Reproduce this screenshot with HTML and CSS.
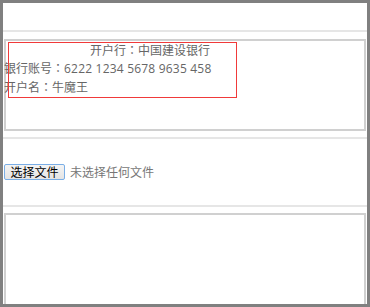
FILE: index.html
```html
<!DOCTYPE html>
<html lang="zh-CN">
<head>
<meta charset="utf-8">
<title>开户信息</title>
<link rel="stylesheet" href="styles.css">
</head>
<body>
<div class="frame">
  <div class="section header"></div>
  <div class="section info">
    <div class="box box-info">
      <div class="info-text">
        <p class="line line-first">开户行<span class="colon" lang="zh-TW">：</span>中国建设银行</p>
        <p class="line">银行账号<span class="colon" lang="zh-TW">：</span><span class="num">6222 1234 5678 9635 458</span></p>
        <p class="line">开户名<span class="colon" lang="zh-TW">：</span>牛魔王</p>
      </div>
      <div class="mark"></div>
    </div>
  </div>
  <div class="section upload">
    <button class="file-btn" type="button">选择文件</button>
    <span class="file-state">未选择任何文件</span>
  </div>
  <div class="section last">
    <div class="box box-empty"></div>
  </div>
</div>
</body>
</html>
```
FILE: styles.css
```css
html, body {
  margin: 0;
  padding: 0;
  background: #808080;
}
.frame {
  width: 370px;
  height: 307px;
  box-sizing: border-box;
  border: 3px solid #808080;
  background: #fff;
  overflow: hidden;
  font-family: "Noto Sans CJK SC", "Noto Sans", sans-serif;
  font-size: 12px;
  color: #666;
}
.section {
  border-bottom: 2px solid #e6e6e6;
}
.header {
  height: 27px;
}
.info {
  padding: 7px 1px 6px;
}
.box {
  border: 2px solid #d0d0d0;
  background: #fff;
}
.box-info {
  position: relative;
  height: 88px;
}
.info-text {
  margin-left: -2px;
}
.line {
  margin: 0;
  line-height: 18px;
  white-space: nowrap;
}
.line-first {
  padding-left: 86px;
}
.colon {
  font-family: "Noto Sans CJK TC", sans-serif;
}
.num {
  font-family: "Open Sans", sans-serif;
  letter-spacing: 0.2px;
}
.mark {
  position: absolute;
  left: 2px;
  top: 1px;
  width: 227px;
  height: 54px;
  border: 1px solid #f03a3a;
}
.upload {
  height: 68px;
  box-sizing: border-box;
  padding: 25px 1px 0;
  display: flex;
  align-items: flex-start;
  gap: 5px;
}
.file-btn {
  margin: 0;
  height: 16px;
  width: 61px;
  padding: 0;
  box-sizing: border-box;
  border: 1px solid #7aaee6;
  border-radius: 2px;
  background: linear-gradient(#f4f4f4, #e4e4e4);
  font-family: "Noto Sans CJK SC", sans-serif;
  font-size: 12px;
  line-height: 14px;
  color: #000;
}
.file-state {
  line-height: 16px;
  color: #777;
}
.last {
  border-bottom: none;
  padding: 6px 1px 0;
}
.box-empty {
  height: 120px;
}
```
